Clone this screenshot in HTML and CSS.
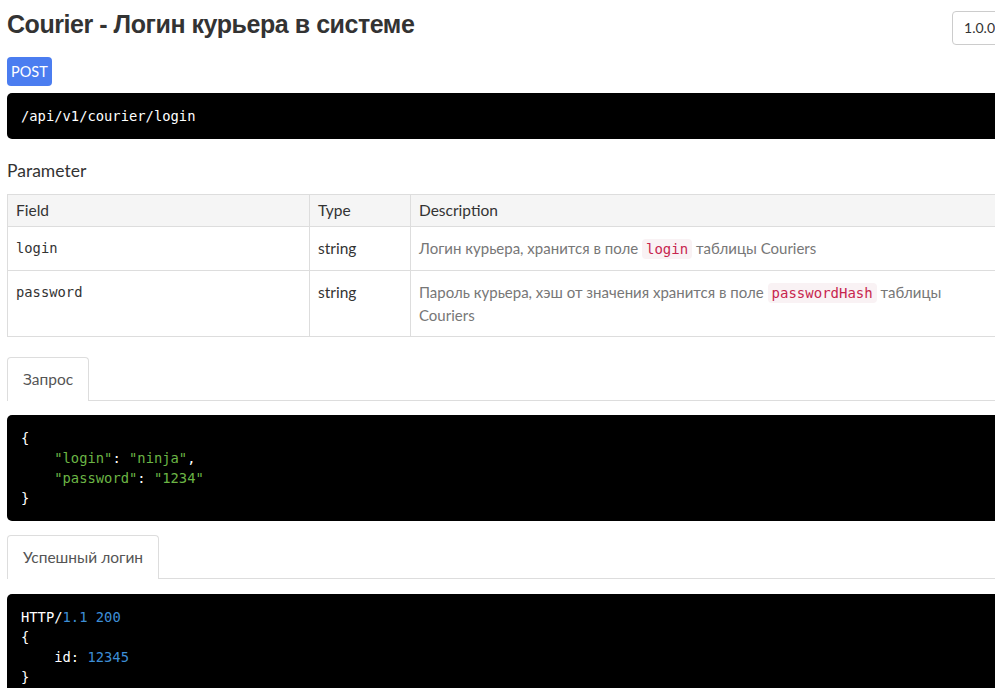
FILE: index.html
```html
<!DOCTYPE html>
<html lang="ru">
<head>
<meta charset="utf-8">
<title>Courier - Логин курьера в системе</title>
<link rel="stylesheet" href="styles.css">
</head>
<body>
<div class="page">
  <div class="header">
    <h1 class="title">Courier - Логин курьера в системе</h1>
    <div class="version">1.0.0</div>
  </div>
  <span class="badge">POST</span>
  <pre class="code code-url">/api/v1/courier/login</pre>

  <h2 class="section">Parameter</h2>
  <table class="params">
    <thead>
      <tr><th class="c-field">Field</th><th class="c-type">Type</th><th>Description</th></tr>
    </thead>
    <tbody>
      <tr>
        <td class="mono">login</td>
        <td class="type">string</td>
        <td class="desc">Логин курьера, хранится в поле <code class="inline">login</code> таблицы Couriers</td>
      </tr>
      <tr>
        <td class="mono">password</td>
        <td class="type">string</td>
        <td class="desc">Пароль курьера, хэш от значения хранится в поле <code class="inline">passwordHash</code> таблицы Couriers</td>
      </tr>
    </tbody>
  </table>

  <div class="tabs tabs-first"><span class="tab">Запрос</span></div>
  <pre class="code code-first">{
    <span class="str">"login"</span>: <span class="str">"ninja"</span>,
    <span class="str">"password"</span>: <span class="str">"1234"</span>
}</pre>

  <div class="tabs"><span class="tab">Успешный логин</span></div>
  <pre class="code code-last">HTTP/<span class="num">1.1</span> <span class="num">200</span>
{
    id: <span class="num">12345</span>
}</pre>
</div>
</body>
</html>
```

FILE: styles.css
```css
html, body {
  margin: 0;
  padding: 0;
  background: #fff;
  overflow: hidden;
}
body {
  font-family: Lato, "Noto Sans", sans-serif;
  font-size: 15px;
  color: #333;
}
.page {
  width: 1000px;
  padding-left: 7px;
  padding-top: 11px;
}
.header {
  display: flex;
  align-items: flex-start;
}
.title {
  margin: 0;
  font-family: "Liberation Sans", Arial, sans-serif;
  font-weight: bold;
  font-size: 25px;
  line-height: 27px;
  color: #333;
  letter-spacing: -0.45px;
}
.version {
  margin-left: auto;
  border: 1px solid #ccc;
  border-radius: 4px;
  height: 32px;
  line-height: 32px;
  padding: 0 11px;
  font-size: 14px;
  color: #333;
}
.badge {
  display: inline-block;
  margin-top: 12px;
  background: #4b7df0;
  color: #fff;
  border-radius: 4px;
  font-size: 14.5px;
  line-height: 21px;
  padding: 4px 4px;
}
.code {
  margin: 7px 0 0;
  background: #000;
  color: #fff;
  border-radius: 5px;
  font-family: "DejaVu Sans Mono", "Liberation Mono", monospace;
  font-size: 13.8px;
  line-height: 20px;
  padding: 13px 14px;
  white-space: pre;
}
.code-url {
  line-height: 22px;
  padding: 12px 14px;
}
.str { color: #6bb545; }
.num { color: #3d8ed6; }
.section {
  margin: 20px 0 11px;
  font-weight: normal;
  font-size: 17.5px;
  line-height: 24px;
  color: #333;
}
.params {
  width: 100%;
  border-collapse: collapse;
}
.params th, .params td {
  border: 1px solid #ddd;
  text-align: left;
  vertical-align: top;
  padding: 10px 8px;
  line-height: 22px;
}
.params th {
  background: #f5f5f5;
  font-weight: normal;
  font-size: 15.5px;
  padding: 4px 8px 5px;
}
.c-field { width: 285px; }
.c-type { width: 84px; }
.mono {
  font-family: "DejaVu Sans Mono", "Liberation Mono", monospace;
  font-size: 13.8px;
}
.type { color: #333; font-size: 15.5px; }
.desc { color: #777; }
.inline {
  font-family: "DejaVu Sans Mono", "Liberation Mono", monospace;
  font-size: 14px;
  background: #f9f2f4;
  color: #c7254e;
  border-radius: 4px;
  padding: 2px 4px;
}
.tabs {
  margin-top: 14px;
  border-bottom: 1px solid #ddd;
  display: flex;
}
.tabs-first { margin-top: 20px; }
.tab {
  display: block;
  height: 22px;
  border: 1px solid #ddd;
  border-bottom: none;
  border-radius: 4px 4px 0 0;
  padding: 10px 15px 11px;
  line-height: 22px;
  font-size: 15.5px;
  color: #555;
  margin-bottom: -1px;
  background: #fff;
}
.code-first { margin-top: 14px; }
.code-last { margin-top: 15px; }
```
